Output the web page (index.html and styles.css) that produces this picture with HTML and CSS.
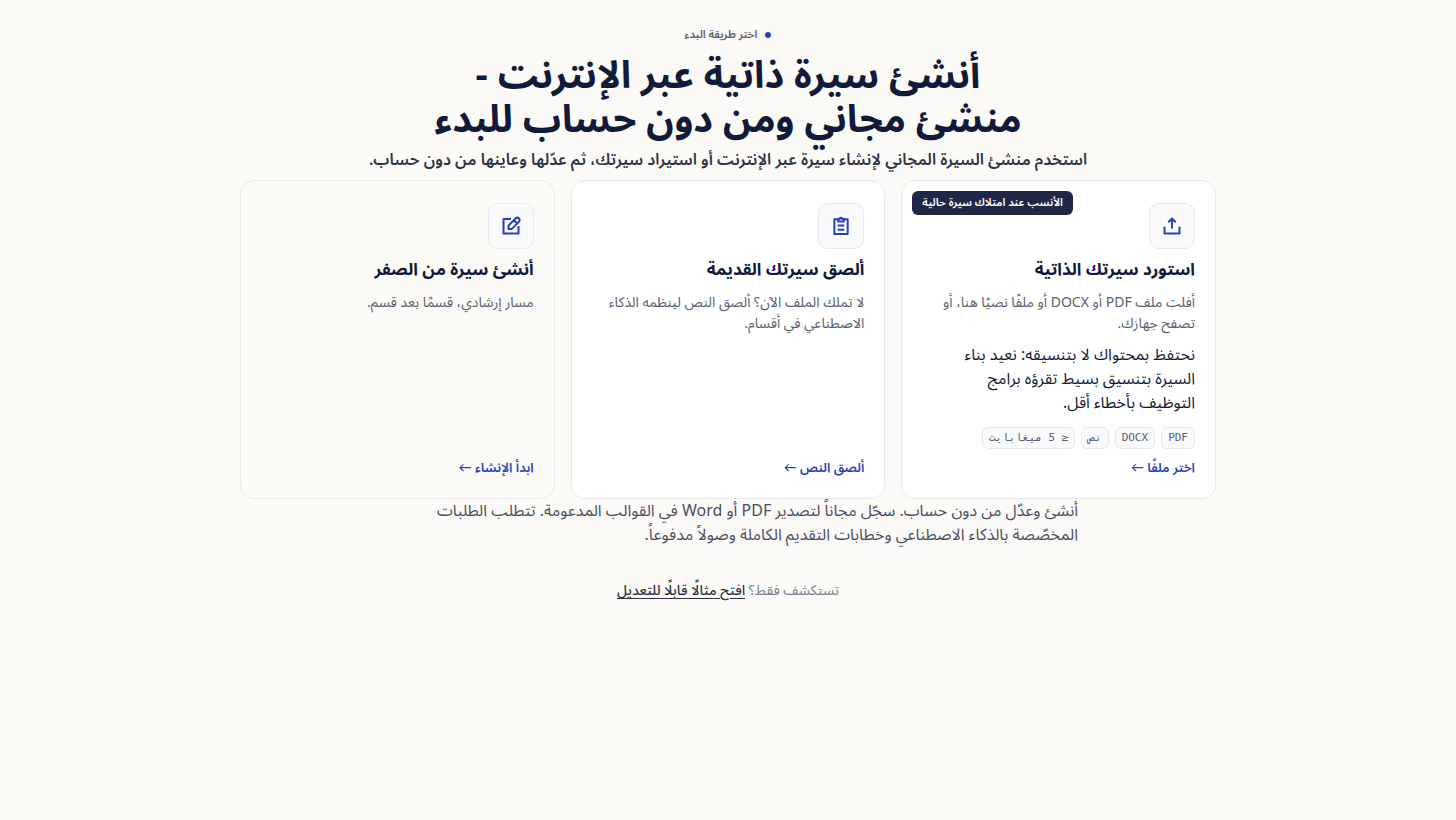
FILE: index.html
```
<!DOCTYPE html>
<html lang="ar" dir="rtl">
<head>
    <meta charset="UTF-8">
    <meta name="viewport" content="width=device-width, initial-scale=1.0">
    <title>أنشئ سيرة ذاتية</title>
    <link rel="stylesheet" href="styles.css">
</head>
<body>

<main class="container">
    <header class="intro">
        <p class="eyebrow"><span class="dot"></span>اختر طريقة البدء</p>
        <h1>أنشئ سيرة ذاتية عبر الإنترنت - <br>منشئ مجاني ومن دون حساب للبدء</h1>
        <p class="subtitle">استخدم منشئ السيرة المجاني لإنشاء سيرة عبر الإنترنت أو استيراد سيرتك، ثم عدّلها وعاينها من دون حساب.</p>
    </header>

    <section class="cards">
        <article class="card">
            <span class="badge">الأنسب عند امتلاك سيرة حالية</span>
            <div class="icon">
                <svg viewBox="0 0 24 24"><path d="M12 15V3M7.500 7.500 12 3l4.500 4.500M3 13v8h18v-8"/></svg>
            </div>
            <h2>استورد سيرتك الذاتية</h2>
            <p class="desc">أفلت ملف PDF أو DOCX أو ملفًا نصيًا هنا، أو تصفح جهازك.</p>
            <p class="note">نحتفظ بمحتواك لا بتنسيقه: نعيد بناء السيرة بتنسيق بسيط تقرؤه برامج التوظيف بأخطاء أقل.</p>
            <ul class="formats">
                <li>PDF</li>
                <li>DOCX</li>
                <li>نص</li>
                <li>≤ 5 ميغابايت</li>
            </ul>
            <button type="button" class="action">اختر ملفًا ←</button>
        </article>

        <article class="card">
            <div class="icon">
                <svg viewBox="0 0 24 24"><path d="M8.500 4H4v17.500h16V4h-4.500M8.500 3.500h2a1.500 1.500 0 0 1 3 0h2v3h-7zM8 11.500h8M8 16.500h8"/></svg>
            </div>
            <h2>ألصق سيرتك القديمة</h2>
            <p class="desc">لا تملك الملف الآن؟ ألصق النص لينظمه الذكاء الاصطناعي في أقسام.</p>
            <button type="button" class="action">ألصق النص ←</button>
        </article>

        <article class="card card-plain">
            <div class="icon">
                <svg viewBox="0 0 24 24"><path d="M12 3.500H3V21h18v-9M9 15.500v-4l8.500-8.500a2.500 2.500 0 0 1 4 4L13 15.500zM15.500 5l4 4"/></svg>
            </div>
            <h2>أنشئ سيرة من الصفر</h2>
            <p class="desc">مسار إرشادي، قسمًا بعد قسم.</p>
            <button type="button" class="action">ابدأ الإنشاء ←</button>
        </article>
    </section>

    <p class="terms">أنشئ وعدّل من دون حساب. سجّل مجاناً لتصدير PDF أو Word في القوالب المدعومة. تتطلب الطلبات المخصّصة بالذكاء الاصطناعي وخطابات التقديم الكاملة وصولاً مدفوعاً.</p>
    <p class="explore">تستكشف فقط؟ <a href="#">افتح مثالًا قابلًا للتعديل</a></p>
</main>

</body>
</html>
```
FILE: styles.css
```
* {
    box-sizing: border-box;
}

body {
    margin: 0;
    background: #fcfaf6;
    color: #111a3a;
    font-family: "Noto Sans Arabic", "Noto Sans", Lato, sans-serif;
    font-size: 16px;
    line-height: 24px;
}

h1, h2, p, ul {
    margin: 0;
}

.container {
    max-width: 1024px;
    margin: 0 auto;
    padding: 24px;
}

.intro {
    text-align: center;
}

.eyebrow {
    display: flex;
    justify-content: center;
    align-items: center;
    gap: 8px;
    color: #5b6070;
    font-size: 11px;
    font-weight: 600;
    line-height: 22px;
}

.dot {
    width: 6px;
    height: 6px;
    border-radius: 50%;
    background: #2b3fb5;
}

h1 {
    max-width: 640px;
    margin: 8px auto 0;
    font-size: 38px;
    font-weight: 700;
    line-height: 44px;
}

.subtitle {
    margin: 6px 0 8px;
    color: #2f3342;
    font-size: 16px;
    font-weight: 600;
}

.cards {
    display: grid;
    grid-template-columns: repeat(3, 1fr);
    gap: 16px;
}

.card {
    position: relative;
    display: flex;
    flex-direction: column;
    align-items: flex-start;
    padding: 22px 20px 20px;
    border: 1px solid #e8e8ec;
    border-radius: 14px;
    background: #fff;
}

.card-plain {
    background: transparent;
}

.badge {
    position: absolute;
    top: 10px;
    left: 10px;
    padding: 0 10px;
    border-radius: 6px;
    background: #1f2747;
    color: #fff;
    font-size: 11px;
    font-weight: 600;
    line-height: 24px;
}

.icon {
    display: flex;
    justify-content: center;
    align-items: center;
    width: 46px;
    height: 46px;
    border: 1px solid #e4e8ef;
    border-radius: 10px;
    background: #f8fafc;
}

.icon svg {
    width: 20px;
    height: 20px;
    fill: none;
    stroke: #2b3fb5;
    stroke-width: 2.4;
    stroke-linejoin: round;
}

h2 {
    margin-top: 9px;
    font-size: 17px;
    font-weight: 700;
    line-height: 24px;
}

.desc {
    margin-top: 10px;
    color: #5b6070;
    font-size: 14px;
    line-height: 21px;
}

.note {
    max-width: 260px;
    margin-top: 9px;
}

.formats {
    display: flex;
    flex-wrap: wrap;
    gap: 6px;
    margin-top: 12px;
    padding: 0;
    list-style: none;
}

.formats li {
    padding: 0 6px;
    border: 1px solid #e4e8ef;
    border-radius: 6px;
    background: #f8fafc;
    color: #5b6070;
    font-family: "DejaVu Sans Mono", monospace;
    font-size: 11px;
    line-height: 20px;
}

.action {
    margin-top: auto;
    padding: 9px 0 0;
    border: none;
    background: none;
    color: #2b3fb5;
    font-family: inherit;
    font-size: 13px;
    font-weight: 600;
    line-height: 20px;
    cursor: pointer;
}

.terms {
    max-width: 700px;
    margin: 0 auto;
    color: #4a4f60;
}

.explore {
    margin-top: 32px;
    color: #7b7f8c;
    font-size: 14px;
    text-align: center;
}

.explore a {
    color: #2f3342;
    font-weight: 500;
    text-underline-offset: 3px;
}
```
